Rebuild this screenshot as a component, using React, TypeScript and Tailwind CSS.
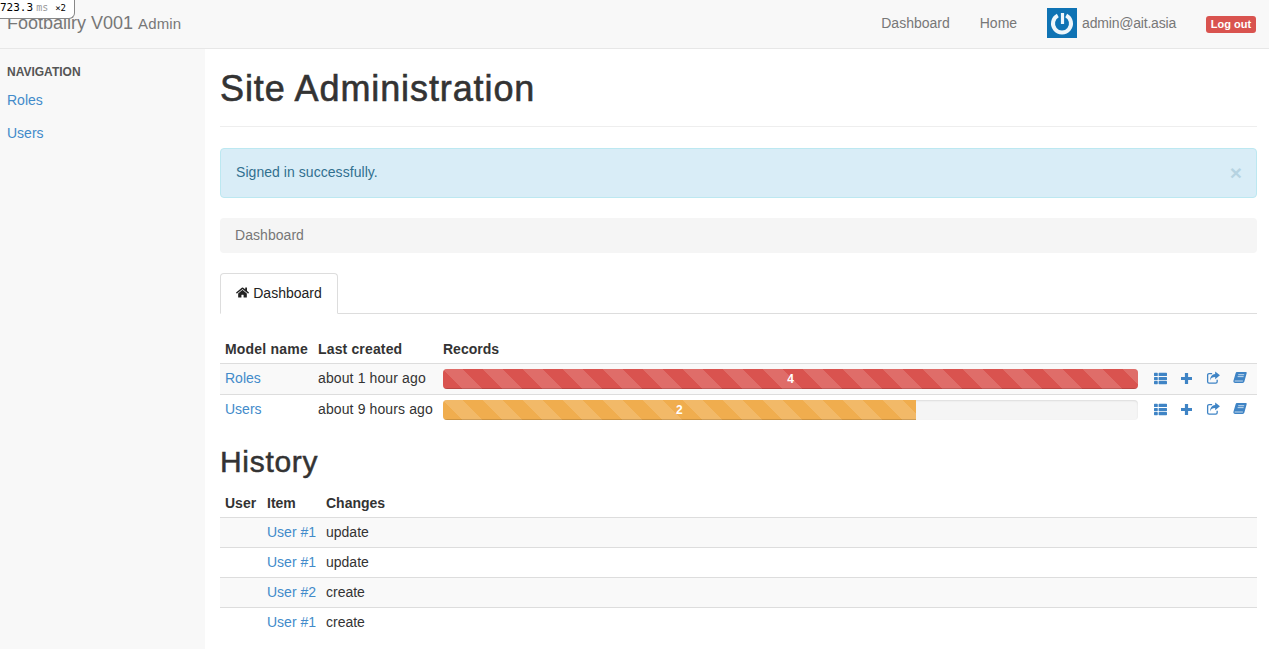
import { FaHome, FaThList } from "react-icons/fa";

const stripes =
  "bg-[linear-gradient(45deg,rgba(255,255,255,0.15)_25%,transparent_25%,transparent_50%,rgba(255,255,255,0.15)_50%,rgba(255,255,255,0.15)_75%,transparent_75%,transparent)] bg-[length:40px_40px]";

function PlusIcon() {
  return (
    <svg width="11" height="11" viewBox="0 0 11 11" className="shrink-0">
      <path d="M5.5 0v11M0 5.5h11" stroke="#3f84c5" strokeWidth="3.2" fill="none" />
    </svg>
  );
}

function ShareIcon() {
  return (
    <svg width="14" height="13" viewBox="0 0 16 15" className="shrink-0">
      <path
        d="M7 3H3.5A1.7 1.7 0 0 0 1.8 4.7v7.6A1.7 1.7 0 0 0 3.5 14h7.6a1.7 1.7 0 0 0 1.7-1.7V10"
        fill="none"
        stroke="#3f84c5"
        strokeWidth="1.5"
      />
      <path
        d="M10.5 0.5L16 5 10.5 9.5V7C7.5 7 5.5 7.8 4.6 11 4.6 6.8 6.8 3.6 10.5 3.4Z"
        fill="#3f84c5"
      />
    </svg>
  );
}

function BookIcon() {
  return (
    <svg width="14" height="13" viewBox="0 0 16 14" className="shrink-0">
      <path
        d="M4.5 .8H14.6c.8 0 1.2.6 1 1.3L13 11.6c-.3 1-.9 1.6-2 1.6H2.5C1 13.2.1 12 .5 10.6L3 2.2C3.2 1.3 3.7.8 4.5.8Z"
        fill="#3f84c5"
      />
      <path d="M6 3.8h6.8M5.3 6h6.8M1.9 11h9.4" stroke="#ffffff" strokeWidth="0.8" fill="none" />
    </svg>
  );
}

function Actions() {
  return (
    <div className="flex items-center h-[20px] -mt-[2px] pl-[5px] text-[#3f84c5]">
      <FaThList className="w-[15px] h-[13px] shrink-0" />
      <span className="ml-[13px] flex"><PlusIcon /></span>
      <span className="ml-[14px] flex -mt-[2px]"><ShareIcon /></span>
      <span className="ml-[13px] flex -mt-[1px]"><BookIcon /></span>
    </div>
  );
}

function Bar({ pct, color, label }: { pct: string; color: string; label: string }) {
  return (
    <div className="h-[20px] rounded-[4px] bg-[#f5f5f5] overflow-hidden shadow-[inset_0_1px_2px_rgba(0,0,0,0.1)]">
      <div
        className={`h-full text-white text-[12px] font-bold leading-[20px] text-center shadow-[inset_0_-1px_0_rgba(0,0,0,0.15)] ${stripes} ${color}`}
        style={{ width: pct }}
      >
        {label}
      </div>
    </div>
  );
}

const history = [
  ["User #1", "update"],
  ["User #1", "update"],
  ["User #2", "create"],
  ["User #1", "create"],
];

export default function App() {
  return (
    <div className="relative h-[649px] overflow-hidden bg-white text-[14px] leading-[20px] text-[#333] font-['Liberation_Sans',Arial,sans-serif]">
      <div className="absolute left-0 top-0 z-10 h-[19px] w-[75px] bg-white border border-t-0 border-l-0 border-[#888] rounded-br-[6px] font-['DejaVu_Sans_Mono',monospace] text-[11px] leading-[15px] whitespace-nowrap text-black flex items-baseline">
        <span>723.3</span>
        <span className="ml-[3px] text-[10px] text-[#999]">ms</span>
        <span className="ml-[7px] text-[9px]">×2</span>
      </div>

      <header className="h-[49px] bg-[#f8f8f8] border-b border-[#e7e7e7] flex items-center text-[#777] pb-[2px]">
        <div className="pl-[7px] flex items-baseline gap-[5px]">
          <span className="text-[18px]">Footballry V001</span>
          <span className="text-[15px] tracking-[0.15px]">Admin</span>
        </div>
        <nav className="ml-auto flex items-center pr-[13px]">
          <span>Dashboard</span>
          <span className="ml-[30px]">Home</span>
          <span className="ml-[30px] w-[30px] h-[30px] bg-[#0f73b4] flex items-center justify-center">
            <svg width="30" height="30" viewBox="0 0 30 30" fill="none" stroke="#eef6fb">
              <path d="M19.2 7.55A9 9 0 1 1 10.8 7.55" strokeWidth="4" />
              <path d="M15.5 5v11" strokeWidth="3.2" />
            </svg>
          </span>
          <span className="ml-[5px] tracking-[-0.2px]">admin@ait.asia</span>
          <span className="ml-[30px] mt-[3px] h-[17px] w-[50px] rounded-[3px] bg-[#d9534f] text-white text-[11px] font-bold leading-[17px] text-center">
            Log out
          </span>
        </nav>
      </header>

      <div className="flex h-[600px]">
        <aside className="w-[205px] shrink-0 bg-[#f8f8f8] pl-[7px] pt-[13px]">
          <div className="text-[12px] font-bold text-[#555] leading-[20px]">NAVIGATION</div>
          <div className="mt-[8px] text-[#428bca] leading-[20px]">Roles</div>
          <div className="mt-[13px] text-[#428bca] leading-[20px]">Users</div>
        </aside>

        <main className="flex-1 pl-[15px] pr-[12px] min-w-0">
          <h1 className="text-[36px] leading-[40px] font-normal tracking-[0.9px] [-webkit-text-stroke:0.6px_#333] pt-[1px] mt-[19px] pb-[17px] border-b border-[#eee]">
            Site Administration
          </h1>

          <div className="mt-[21px] h-[50px] border border-[#bce8f1] bg-[#d9edf7] rounded-[4px] text-[#31708f] flex items-center justify-between pl-[15px] pr-[14px] pb-[2px]">
            <span className="tracking-[0.05px]">Signed in successfully.</span>
            <span className="text-[21px] font-bold text-[#31708f] opacity-20 leading-none">×</span>
          </div>

          <div className="mt-[20px] h-[35px] bg-[#f5f5f5] rounded-[4px] pl-[15px] pb-[2px] flex items-center text-[#777] tracking-[0.05px]">
            Dashboard
          </div>

          <div className="mt-[20px] h-[41px] border-b border-[#ddd] flex">
            <div className="h-[41px] w-[118px] border border-[#ddd] border-b-white bg-white rounded-t-[4px] flex items-center justify-center gap-[4px] text-[#222] pb-[2px]">
              <FaHome className="text-[13px]" />
              <span>Dashboard</span>
            </div>
          </div>

          <table className="mt-[20px] w-full border-separate border-spacing-0 table-fixed">
            <colgroup>
              <col className="w-[93px]" />
              <col className="w-[125px]" />
              <col />
              <col className="w-[114px]" />
            </colgroup>
            <thead>
              <tr className="text-left whitespace-nowrap">
                <th className="p-[5px] pb-[4px] font-bold tracking-[0.2px]">Model name</th>
                <th className="p-[5px] pb-[4px] font-bold tracking-[0.15px]">Last created</th>
                <th className="p-[5px] pb-[4px] font-bold">Records</th>
                <th />
              </tr>
            </thead>
            <tbody className="whitespace-nowrap">
              <tr className="bg-[#f9f9f9]">
                <td className="px-[5px] pt-[4px] pb-[6px] border-t border-[#ddd] text-[#428bca]">Roles</td>
                <td className="px-[5px] pt-[4px] pb-[6px] border-t border-[#ddd] tracking-[0.12px]">about 1 hour ago</td>
                <td className="px-[5px] py-[5px] border-t border-[#ddd]">
                  <Bar pct="100%" color="bg-[#d9534f]" label="4" />
                </td>
                <td className="px-[5px] py-[5px] border-t border-[#ddd]"><Actions /></td>
              </tr>
              <tr>
                <td className="px-[5px] pt-[4px] pb-[6px] border-t border-[#ddd] text-[#428bca]">Users</td>
                <td className="px-[5px] pt-[4px] pb-[6px] border-t border-[#ddd] tracking-[0.12px]">about 9 hours ago</td>
                <td className="px-[5px] py-[5px] border-t border-[#ddd]">
                  <Bar pct="68%" color="bg-[#f0ad4e]" label="2" />
                </td>
                <td className="px-[5px] py-[5px] border-t border-[#ddd]"><Actions /></td>
              </tr>
            </tbody>
          </table>

          <h2 className="text-[30px] leading-[33px] font-normal tracking-[0.7px] [-webkit-text-stroke:0.5px_#333] mt-[20px]">History</h2>

          <table className="mt-[10px] w-full border-separate border-spacing-0 table-fixed">
            <colgroup>
              <col className="w-[42px]" />
              <col className="w-[59px]" />
              <col />
            </colgroup>
            <thead>
              <tr className="text-left whitespace-nowrap">
                <th className="p-[5px] pb-[4px] font-bold">User</th>
                <th className="p-[5px] pb-[4px] font-bold">Item</th>
                <th className="p-[5px] pb-[4px] font-bold">Changes</th>
              </tr>
            </thead>
            <tbody className="whitespace-nowrap">
              {history.map(([item, change], i) => (
                <tr key={i} className={i % 2 === 0 ? "bg-[#f9f9f9]" : ""}>
                  <td className="px-[5px] py-[5px] leading-[19px] border-t border-[#ddd]" />
                  <td className="px-[5px] py-[5px] leading-[19px] border-t border-[#ddd] text-[#428bca]">{item}</td>
                  <td className="px-[5px] py-[5px] leading-[19px] border-t border-[#ddd]">{change}</td>
                </tr>
              ))}
            </tbody>
          </table>
        </main>
      </div>
    </div>
  );
}
